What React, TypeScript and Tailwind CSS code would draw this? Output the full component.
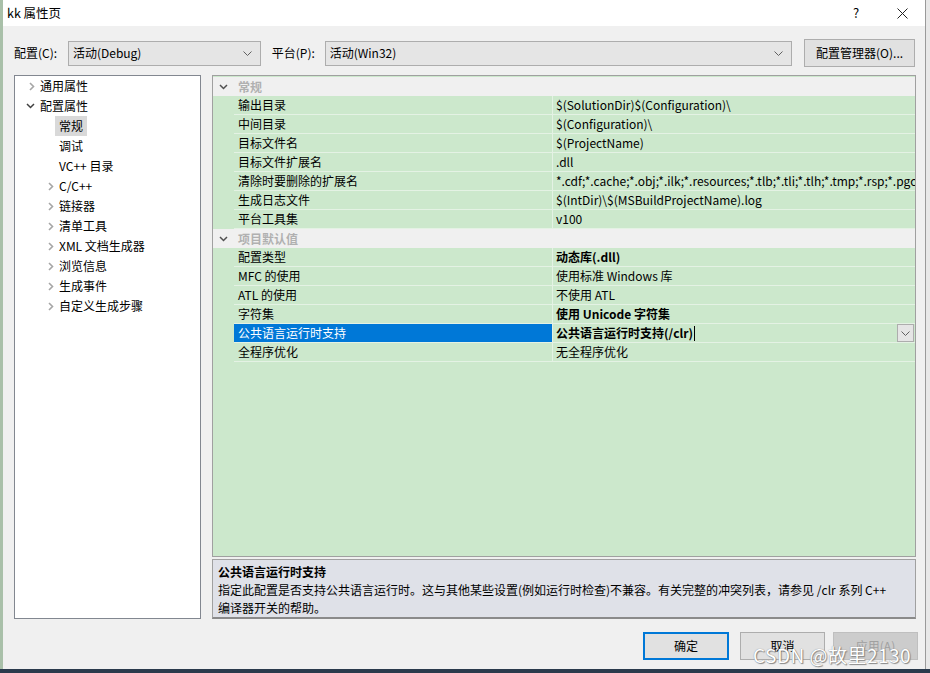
import React from 'react'

const font = "font-['Noto_Sans_CJK_SC',sans-serif]"

function ChevronRight({ className = '' }: { className?: string }) {
  return (
    <svg width="6" height="9" viewBox="0 0 6 9" className={className}>
      <polyline points="1,1 4.5,4.5 1,8" fill="none" stroke="#a6a6a6" strokeWidth="1.6" />
    </svg>
  )
}

function ChevronDown({ color = '#404040' }: { color?: string }) {
  return (
    <svg width="9" height="6" viewBox="0 0 9 6">
      <polyline points="1,1 4.5,4.5 8,1" fill="none" stroke={color} strokeWidth="1.5" />
    </svg>
  )
}

function SmallChevron() {
  return (
    <svg width="9" height="5" viewBox="0 0 9 5">
      <polyline points="0.5,0.5 4.5,4.5 8.5,0.5" fill="none" stroke="#606060" strokeWidth="1" />
    </svg>
  )
}

type TreeItem = { label: string; level: 0 | 1; state: 'open' | 'closed' | 'leaf'; selected?: boolean }

const tree: TreeItem[] = [
  { label: '通用属性', level: 0, state: 'closed' },
  { label: '配置属性', level: 0, state: 'open' },
  { label: '常规', level: 1, state: 'leaf', selected: true },
  { label: '调试', level: 1, state: 'leaf' },
  { label: 'VC++ 目录', level: 1, state: 'leaf' },
  { label: 'C/C++', level: 1, state: 'closed' },
  { label: '链接器', level: 1, state: 'closed' },
  { label: '清单工具', level: 1, state: 'closed' },
  { label: 'XML 文档生成器', level: 1, state: 'closed' },
  { label: '浏览信息', level: 1, state: 'closed' },
  { label: '生成事件', level: 1, state: 'closed' },
  { label: '自定义生成步骤', level: 1, state: 'closed' },
]

type Prop = { name: string; value: string; bold?: boolean; selected?: boolean }

const groups: { title: string; rows: Prop[] }[] = [
  {
    title: '常规',
    rows: [
      { name: '输出目录', value: '$(SolutionDir)$(Configuration)\\' },
      { name: '中间目录', value: '$(Configuration)\\' },
      { name: '目标文件名', value: '$(ProjectName)' },
      { name: '目标文件扩展名', value: '.dll' },
      {
        name: '清除时要删除的扩展名',
        value: '*.cdf;*.cache;*.obj;*.ilk;*.resources;*.tlb;*.tli;*.tlh;*.tmp;*.rsp;*.pgc;*.pgd;*.meta;$(TargetPath)',
      },
      { name: '生成日志文件', value: '$(IntDir)\\$(MSBuildProjectName).log' },
      { name: '平台工具集', value: 'v100' },
    ],
  },
  {
    title: '项目默认值',
    rows: [
      { name: '配置类型', value: '动态库(.dll)', bold: true },
      { name: 'MFC 的使用', value: '使用标准 Windows 库' },
      { name: 'ATL 的使用', value: '不使用 ATL' },
      { name: '字符集', value: '使用 Unicode 字符集', bold: true },
      { name: '公共语言运行时支持', value: '公共语言运行时支持(/clr)', bold: true, selected: true },
      { name: '全程序优化', value: '无全程序优化' },
    ],
  },
]

function Select({ value, width }: { value: string; width: string }) {
  return (
    <div className={`${width} h-[25px] flex items-center justify-between bg-[#e5e5e5] border border-[#adadad] pl-[4px] pr-[8px]`}>
      <span>{value}</span>
      <SmallChevron />
    </div>
  )
}

export default function App() {
  return (
    <div className={`w-[930px] h-[673px] bg-[#2a3a4c] overflow-hidden relative text-[12px] text-black ${font}`}>
      <div className="flex h-[669px]">
        <div className="w-[3px] bg-[#a9c0a9]" />
        <div className="w-[923px] flex flex-col bg-[#f0f0f0] border-r border-[#9a9a9a]">
          {/* Title bar */}
          <div className="h-[26px] bg-white flex items-center justify-between pl-[4px]">
            <span className="text-[12.5px]">kk 属性页</span>
            <div className="flex items-center">
              <span className="w-[46px] text-center text-[13px]">?</span>
              <span className="w-[46px] h-[26px] flex items-center justify-center">
                <svg width="11" height="11" viewBox="0 0 11 11">
                  <path d="M0.5,0.5 L10.5,10.5 M10.5,0.5 L0.5,10.5" stroke="#222" strokeWidth="1" />
                </svg>
              </span>
            </div>
          </div>

          {/* Config row */}
          <div className="flex items-center pl-[11px] pr-[10px] mt-[13px] h-[28px]">
            <span className="w-[54px]">配置(C):</span>
            <Select value="活动(Debug)" width="w-[193px]" />
            <span className="ml-[11px] w-[53px]">平台(P):</span>
            <Select value="活动(Win32)" width="w-[468px]" />
            <div className="ml-[12px] w-[111px] h-[28px] flex items-center justify-center bg-[#e1e1e1] border border-[#adadad]">
              配置管理器(O)...
            </div>
          </div>

          {/* Main area */}
          <div className="flex mt-[8px] pl-[11px] gap-[11px]">
            {/* Tree */}
            <div className="w-[187px] h-[544px] bg-white border border-[#828790]">
              {tree.map((t) => (
                <div key={t.label} className="h-[20px] flex items-center">
                  <div className={`${t.level === 0 ? 'w-[25px]' : 'w-[44px]'} flex justify-end pr-[5px]`}>
                    {t.state === 'closed' && <ChevronRight />}
                    {t.state === 'open' && <ChevronDown />}
                  </div>
                  <span className={`px-[4px] h-[20px] leading-[20px] -translate-x-[4px] ${t.selected ? 'bg-[#d9d9d9]' : ''}`}>
                    {t.label}
                  </span>
                </div>
              ))}
            </div>

            {/* Right side */}
            <div className="w-[704px] flex flex-col gap-[2px]">
              <div className="h-[482px] bg-[#cce8cc] border border-[#a0a0a0] pt-px overflow-hidden">
                {groups.map((g) => (
                  <div key={g.title}>
                    <div className="h-[19px] bg-[#f0f0f0] flex items-center">
                      <div className="w-[21px] flex justify-center">
                        <ChevronDown color="#505050" />
                      </div>
                      <span className="pl-[4px] font-bold text-[#b0b0b0]">{g.title}</span>
                    </div>
                    {g.rows.map((r) => (
                      <div key={r.name} className="h-[19px] flex">
                        <div className="w-[21px] shrink-0" />
                        <div
                          className={`w-[319px] shrink-0 pl-[4px] leading-[18px] border-b border-r border-[#e4f2e4] whitespace-nowrap ${
                            r.selected ? 'bg-[#0078d7] text-white' : ''
                          }`}
                        >
                          {r.name}
                        </div>
                        <div className="flex-1 min-w-0 flex items-center border-b border-[#e4f2e4] pl-[3px] overflow-hidden">
                          <span className={`whitespace-nowrap leading-[18px] ${r.bold ? 'font-bold' : ''}`}>{r.value}</span>
                          {r.selected && (
                            <>
                              <span className="w-px h-[15px] bg-black ml-px" />
                              <div className="flex-1" />
                              <div className="w-[17px] h-[18px] bg-[#e5e5e5] border border-[#adadad] flex items-center justify-center mr-[1px]">
                                <SmallChevron />
                              </div>
                            </>
                          )}
                        </div>
                      </div>
                    ))}
                  </div>
                ))}
              </div>

              {/* Description */}
              <div className="h-[60px] bg-[#dfe1e8] border border-[#a0a0a0] border-b-2 border-b-[#8a8a8a] pl-[5px] pt-[3px] leading-[18px]">
                <div className="font-bold">公共语言运行时支持</div>
                <div>指定此配置是否支持公共语言运行时。这与其他某些设置(例如运行时检查)不兼容。有关完整的冲突列表，请参见 /clr 系列 C++</div>
                <div>编译器开关的帮助。</div>
              </div>
            </div>
          </div>

          {/* Buttons */}
          <div className="flex justify-end gap-[11px] pr-[7px] mt-[13px]">
            <div className="w-[86px] h-[28px] flex items-center justify-center bg-[#e1e1e1] border-2 border-[#0078d7]">确定</div>
            <div className="w-[85px] h-[28px] flex items-center justify-center bg-[#e1e1e1] border border-[#adadad]">取消</div>
            <div className="w-[85px] h-[28px] flex items-center justify-center bg-[#cccccc] border border-[#bfbfbf] text-[#a0a0a0] -ml-[3px]">应用(A)</div>
          </div>
        </div>
        <div className="w-[4px] bg-[#e8e8e8]" />
      </div>

      {/* watermark */}
      <div className="absolute left-[753px] top-[641px] text-[19px] text-white [text-shadow:0_0_1px_#777,1px_1px_1px_#888] tracking-[0.5px]">
        CSDN @故里2130
      </div>
    </div>
  )
}
